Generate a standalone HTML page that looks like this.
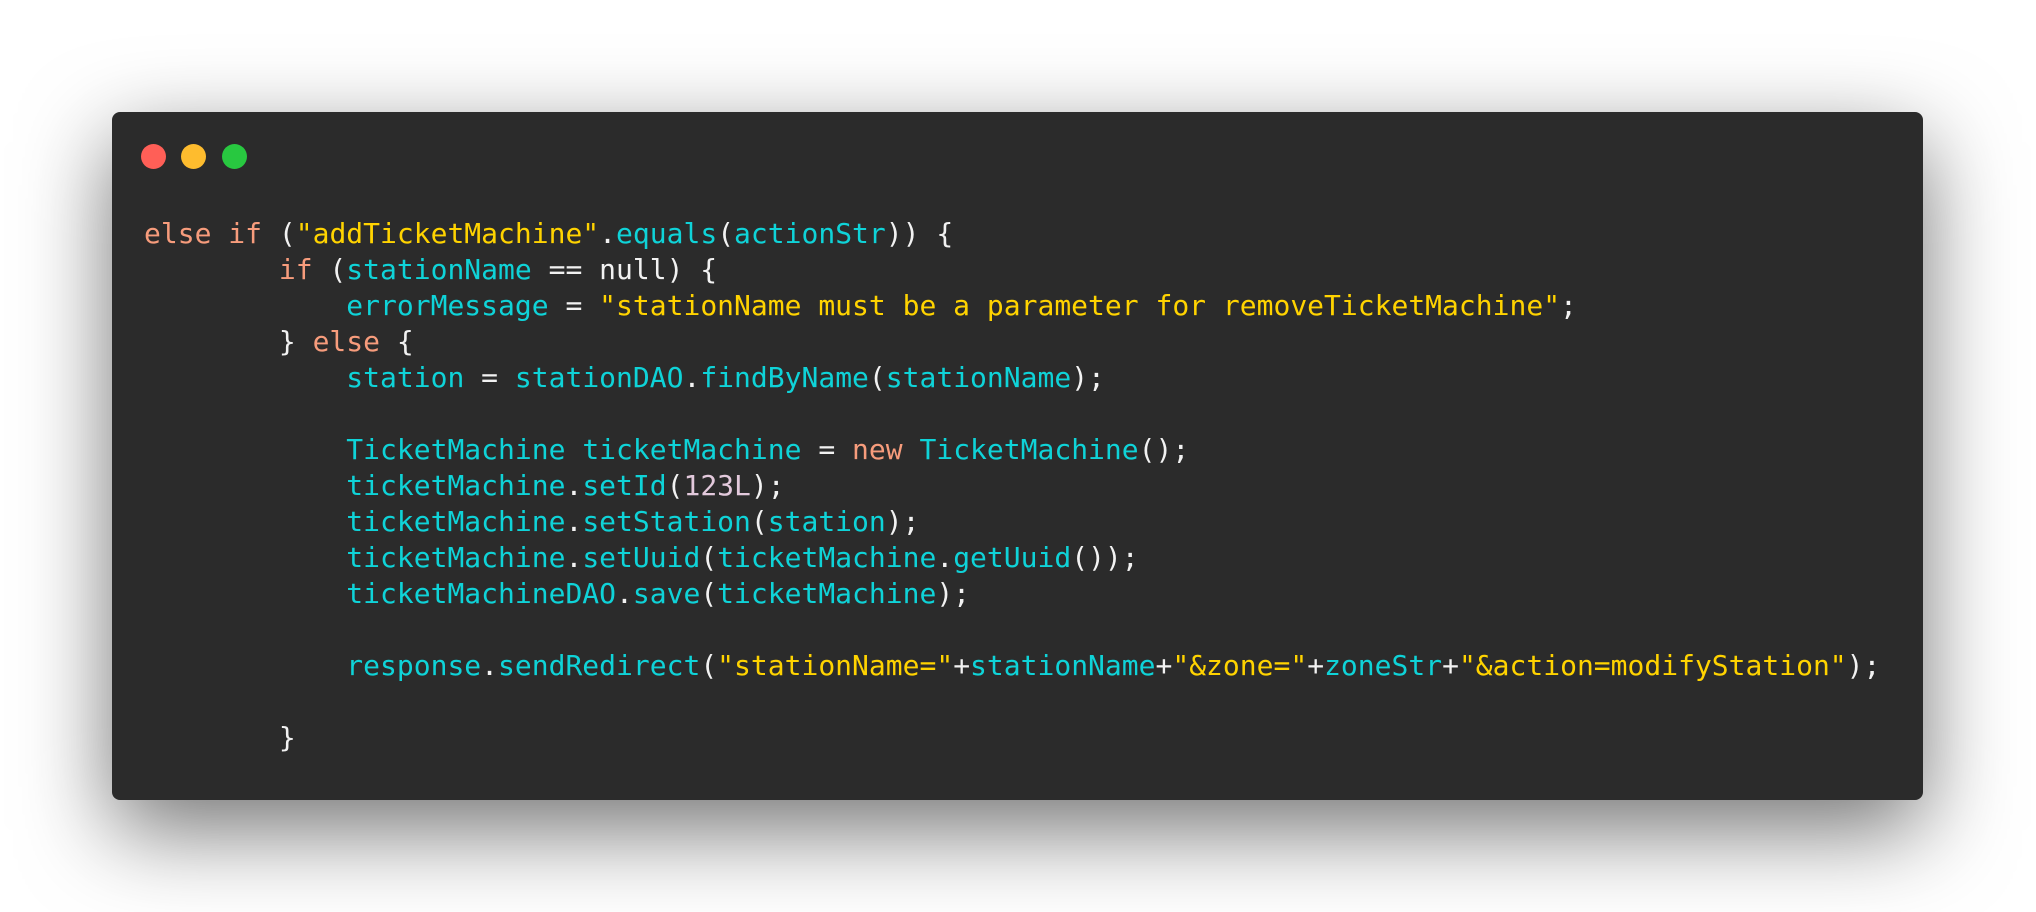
<!DOCTYPE html>
<html><head><style>
html,body{margin:0;padding:0;width:2036px;height:912px;background:#fff;overflow:hidden}
.win{position:absolute;left:112px;top:112px;width:1811px;height:688px;background:#2b2b2b;border-radius:8px;box-shadow:0 30px 90px rgba(0,0,0,0.55)}
.dot{position:absolute;top:144px;width:25px;height:25px;border-radius:50%}
pre{position:absolute;left:144px;top:216px;margin:0;font-family:"DejaVu Sans Mono","Liberation Mono",monospace;font-size:28px;line-height:36px;color:#f2f2f2}
.k{color:#f79c7c}.s{color:#ffd300}.c{color:#0fd3d8}.n{color:#e3c9dc}
</style></head><body>
<div class="win"></div>
<div class="dot" style="left:141px;background:#ff5f57"></div>
<div class="dot" style="left:181px;background:#febc2e"></div>
<div class="dot" style="left:222px;background:#28c840"></div>
<pre><span class="k">else</span> <span class="k">if</span> (<span class="s">"addTicketMachine"</span>.<span class="c">equals</span>(<span class="c">actionStr</span>)) {
        <span class="k">if</span> (<span class="c">stationName</span> == null) {
            <span class="c">errorMessage</span> = <span class="s">"stationName must be a parameter for removeTicketMachine"</span>;
        } <span class="k">else</span> {
            <span class="c">station</span> = <span class="c">stationDAO</span>.<span class="c">findByName</span>(<span class="c">stationName</span>);

            <span class="c">TicketMachine</span> <span class="c">ticketMachine</span> = <span class="k">new</span> <span class="c">TicketMachine</span>();
            <span class="c">ticketMachine</span>.<span class="c">setId</span>(<span class="n">123L</span>);
            <span class="c">ticketMachine</span>.<span class="c">setStation</span>(<span class="c">station</span>);
            <span class="c">ticketMachine</span>.<span class="c">setUuid</span>(<span class="c">ticketMachine</span>.<span class="c">getUuid</span>());
            <span class="c">ticketMachineDAO</span>.<span class="c">save</span>(<span class="c">ticketMachine</span>);

            <span class="c">response</span>.<span class="c">sendRedirect</span>(<span class="s">"stationName="</span>+<span class="c">stationName</span>+<span class="s">"&amp;zone="</span>+<span class="c">zoneStr</span>+<span class="s">"&amp;action=modifyStation"</span>);

        }</pre>
</body></html>
